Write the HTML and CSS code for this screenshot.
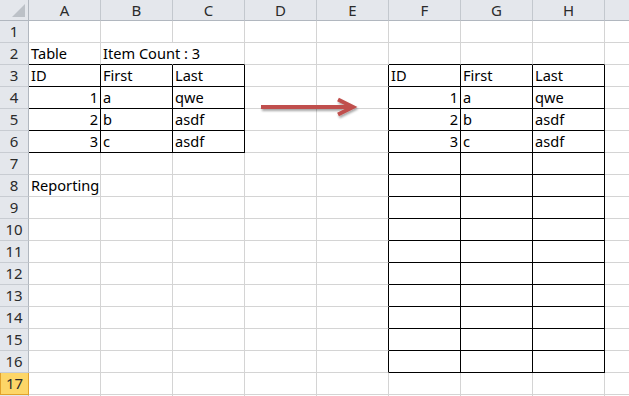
FILE: index.html
```html
<!DOCTYPE html>
<html lang="en">
<head>
	<meta charset="UTF-8">
	<title>Sheet1</title>
	<link rel="stylesheet" href="styles.css">
</head>
<body>
	<div class="sheet">
		<table class="grid">
			<colgroup>
				<col class="col-head">
				<col><col><col><col><col><col><col><col><col>
			</colgroup>
			<tr class="col-titles">
				<th class="corner"><span class="tri"></span></th>
				<th>A</th><th>B</th><th>C</th><th>D</th><th>E</th><th>F</th><th>G</th><th>H</th><th></th>
			</tr>
			<tr><th>1</th><td></td><td></td><td></td><td></td><td></td><td></td><td></td><td></td><td></td></tr>
			<tr><th>2</th><td class="bb">Table</td><td class="bb nr">Item Count : 3</td><td class="bb"></td><td></td><td></td><td class="bb"></td><td class="bb"></td><td class="bb"></td><td></td></tr>
			<!-- 表头 -->
			<tr><th>3</th><td class="bx">ID</td><td class="bx">First</td><td class="bx">Last</td><td></td><td class="br"></td><td class="bx">ID</td><td class="bx">First</td><td class="bx">Last</td><td></td></tr>
			<tr><th>4</th><td class="bx num">1</td><td class="bx">a</td><td class="bx">qwe</td><td></td><td class="br"></td><td class="bx num">1</td><td class="bx">a</td><td class="bx">qwe</td><td></td></tr>
			<tr><th>5</th><td class="bx num">2</td><td class="bx">b</td><td class="bx">asdf</td><td></td><td class="br"></td><td class="bx num">2</td><td class="bx">b</td><td class="bx">asdf</td><td></td></tr>
			<tr><th>6</th><td class="bx num">3</td><td class="bx">c</td><td class="bx">asdf</td><td></td><td class="br"></td><td class="bx num">3</td><td class="bx">c</td><td class="bx">asdf</td><td></td></tr>
			<tr><th>7</th><td></td><td></td><td></td><td></td><td class="br"></td><td class="bx"></td><td class="bx"></td><td class="bx"></td><td></td></tr>
			<tr><th>8</th><td>Reporting</td><td></td><td></td><td></td><td class="br"></td><td class="bx"></td><td class="bx"></td><td class="bx"></td><td></td></tr>
			<tr><th>9</th><td></td><td></td><td></td><td></td><td class="br"></td><td class="bx"></td><td class="bx"></td><td class="bx"></td><td></td></tr>
			<tr><th>10</th><td></td><td></td><td></td><td></td><td class="br"></td><td class="bx"></td><td class="bx"></td><td class="bx"></td><td></td></tr>
			<tr><th>11</th><td></td><td></td><td></td><td></td><td class="br"></td><td class="bx"></td><td class="bx"></td><td class="bx"></td><td></td></tr>
			<tr><th>12</th><td></td><td></td><td></td><td></td><td class="br"></td><td class="bx"></td><td class="bx"></td><td class="bx"></td><td></td></tr>
			<tr><th>13</th><td></td><td></td><td></td><td></td><td class="br"></td><td class="bx"></td><td class="bx"></td><td class="bx"></td><td></td></tr>
			<tr><th>14</th><td></td><td></td><td></td><td></td><td class="br"></td><td class="bx"></td><td class="bx"></td><td class="bx"></td><td></td></tr>
			<tr><th>15</th><td></td><td></td><td></td><td></td><td class="br"></td><td class="bx"></td><td class="bx"></td><td class="bx"></td><td></td></tr>
			<tr><th>16</th><td></td><td></td><td></td><td></td><td class="br"></td><td class="bx"></td><td class="bx"></td><td class="bx"></td><td></td></tr>
			<tr><th class="active">17</th><td></td><td></td><td></td><td></td><td></td><td></td><td></td><td></td><td></td></tr>
			<tr><th></th><td></td><td></td><td></td><td></td><td></td><td></td><td></td><td></td><td></td></tr>
		</table>

		<!-- 浮在表格上的箭头图形 -->
		<svg class="arrow" width="110" height="30" viewBox="0 0 110 30">
			<defs>
				<filter id="shadow" x="-10%" y="-40%" width="130%" height="200%">
					<feDropShadow dx="1" dy="2" stdDeviation="1.2" flood-color="#000" flood-opacity="0.35"/>
				</filter>
			</defs>
			<g filter="url(#shadow)" fill="none" stroke="#c0504d" stroke-width="4" stroke-linejoin="miter">
				<line x1="6" y1="12" x2="96" y2="12"/>
				<polyline points="83,4.5 98,12 83,19.5"/>
			</g>
		</svg>
	</div>
</body>
</html>
```

FILE: styles.css
```css
body {
	margin: 0;
	padding: 0;
	background-color: #fff;
	overflow: hidden;
}

.sheet {
	position: relative;
	width: 629px;
	height: 396px;
	overflow: hidden;
	font-family: "Noto Sans", "Noto Sans CJK KR", sans-serif;
	font-size: 14.6px;
	color: #000;
}

/*表格整体*/
.grid {
	border-collapse: separate;
	border-spacing: 0;
	table-layout: fixed;
	width: 677px; /*29 + 72*9*/
}
.grid col {
	width: 72px;
}
.grid col.col-head {
	width: 29px;
}

.grid td {
	box-sizing: border-box;
	height: 22px;
	padding: 0 2px;
	line-height: 21px;
	vertical-align: bottom;
	white-space: nowrap;
	overflow: visible;
	border-right: 1px solid #d4d4d4;
	border-bottom: 1px solid #d4d4d4;
}
.grid td.num {
	text-align: right;
}

/*黑色边框*/
.grid td.bb,
.grid td.bx {
	border-bottom-color: #000;
}
.grid td.br,
.grid td.bx {
	border-right-color: #000;
}
/*文字溢出到右边单元格时隐藏网格线*/
.grid td.nr {
	border-right-color: #fff;
}

/*行号 列标*/
.grid th {
	box-sizing: border-box;
	height: 22px;
	padding: 0;
	font-weight: normal;
	font-size: 15px;
	line-height: 21px;
	color: #2b2b2b;
	text-align: center;
	vertical-align: bottom;
	background-color: #e4e7ec;
	border-right: 1px solid #b1b7bf;
	border-bottom: 1px solid #c8ccd2;
}
.grid .col-titles th {
	height: 21px;
	line-height: 20px;
	border-bottom-color: #b1b7bf;
	border-right-color: #c3c8ce;
}
.grid .col-titles th.corner {
	position: relative;
	border-right-color: #b1b7bf;
}
.corner .tri {
	position: absolute;
	right: 3px;
	bottom: 3px;
	width: 0;
	height: 0;
	border-left: 13px solid transparent;
	border-bottom: 13px solid #bcc1c7;
}
.grid th.active {
	background-color: #fdd667;
	border: 1px solid #e1a12b;
	border-top: none;
}

.arrow {
	position: absolute;
	left: 255px;
	top: 95px;
}
```
